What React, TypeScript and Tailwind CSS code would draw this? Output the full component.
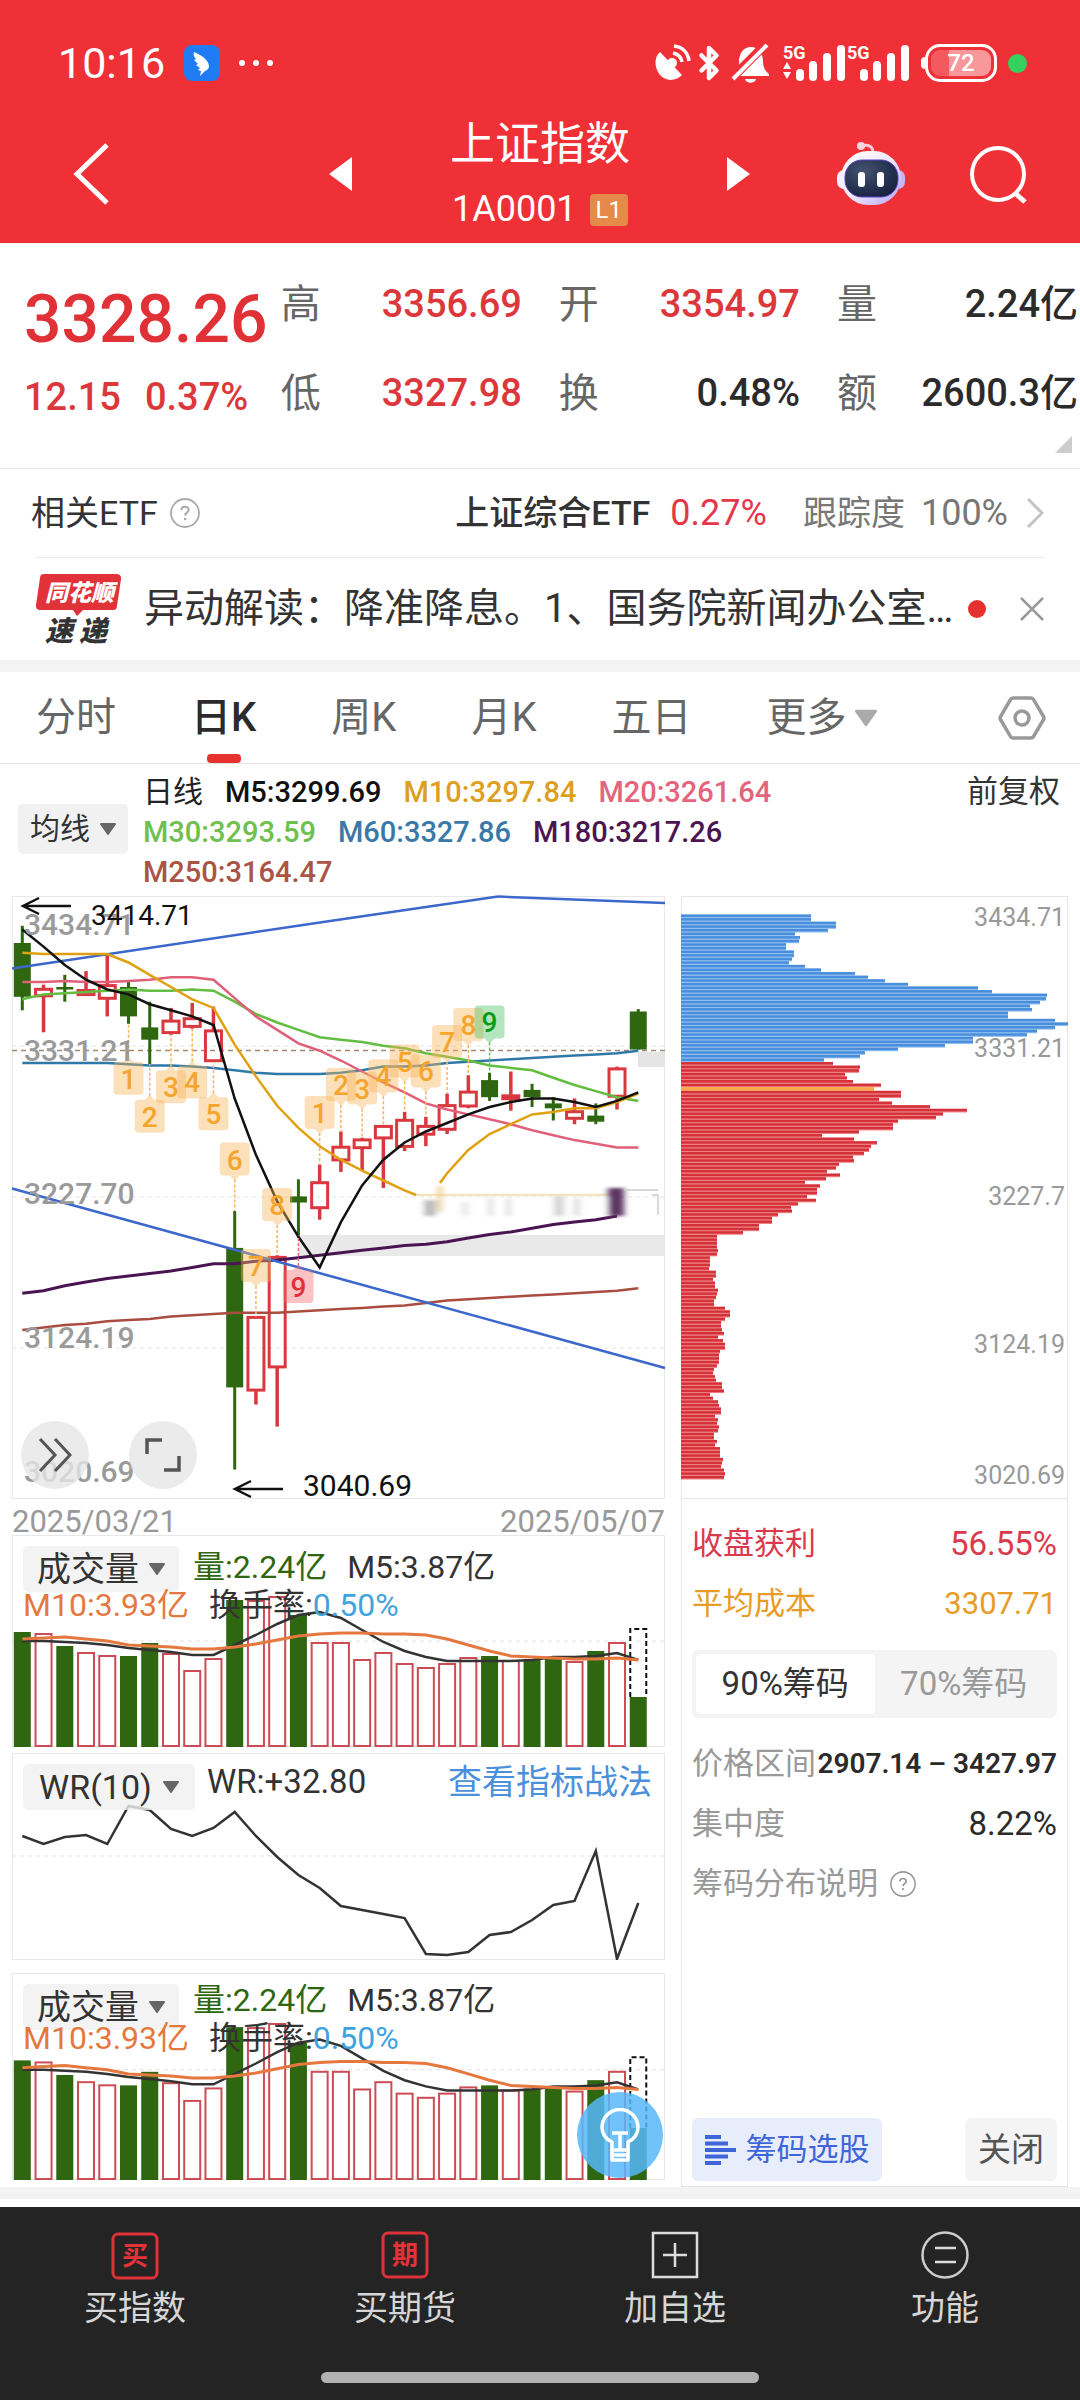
import React, { useState } from "react";
import { LuBluetooth } from "react-icons/lu";

const GREEN = "#2f6711";
const RED = "#d9383f";

// ---- chart data ----

const STEP = 21.24;
const cx = (i: number) => 10.3 + STEP * i;
const py = (v: number) => Math.round(v * 12.245 - 8) / 10;

// [up, wick top, body top, body bottom, wick bottom]
const candles: [number, number, number, number, number][] = [
  [0, 25, 39, 83, 94], [1, 73, 76, 83, 112], [0, 65, 75, 77, 87], [1, 62, 77, 82, 82], [1, 48, 73, 85, 99],
  [0, 71, 75, 99, 105], [0, 87, 108, 118, 138], [1, 92, 102, 113, 114], [1, 88, 100, 108, 109], [1, 91, 110, 136, 136],
  [0, 258, 288, 402, 469], [1, 344, 344, 405, 416], [1, 294, 295, 386, 434], [0, 232, 246, 251, 278], [1, 220, 234, 256, 265],
  [1, 193, 205, 217, 226], [1, 198, 199, 207, 225], [1, 188, 188, 199, 239], [1, 177, 183, 206, 209], [1, 181, 188, 196, 205],
  [1, 162, 171, 192, 195], [1, 147, 160, 173, 174], [0, 145, 151, 165, 168], [1, 144, 163, 167, 176], [0, 154, 159, 165, 173],
  [0, 165, 170, 174, 184], [1, 166, 176, 183, 187], [0, 170, 180, 185, 187], [1, 140, 141, 165, 175], [0, 93, 95, 126, 126],
];

const ma5 = [28, 42, 57, 69, 77, 81, 89, 94, 99, 106, 166, 212, 250, 279, 304, 267, 237, 216, 202, 193, 186, 179, 173, 169, 166, 166, 169, 173, 168, 161];
const ma10a = [47, 48, 48, 48, 48, 55, 65, 75, 85, 92, 122, 148, 172, 190, 205, 216, 225, 233, 241];
const ma10b = [227, 208, 195, 187, 179, 177, 174, 174, 169, 162];
const ma20 = [71, 71, 70, 71, 71, 70, 69, 67, 67, 69, 84, 99, 110, 121, 127, 135, 144, 153, 161, 170, 175, 179, 183, 187, 192, 196, 200, 203, 206, 206];
const ma30 = [85, 81, 80, 79, 78, 77, 78, 78, 77, 78, 87, 97, 104, 110, 116, 118, 120, 123, 125, 129, 132, 135, 139, 141, 143, 149, 155, 160, 165, 168];
const ma60 = [137, 137, 137, 137, 137, 138, 139, 139, 140, 141, 143, 145, 146, 146, 146, 145, 143, 140, 140, 139, 137, 136, 135, 134, 133, 132, 131, 130, 129, 127];
const ma180 = [325, 323, 319, 316, 313, 311, 309, 307, 304, 301, 301, 299, 298, 296, 294, 292, 290, 288, 286, 285, 283, 280, 277, 275, 272, 269, 267, 265, 262];
const ma250 = [355, 353, 351, 350, 348, 347, 346, 344, 343, 342, 341, 341, 341, 340, 339, 338, 337, 336, 335, 333, 331, 330, 329, 328, 327, 326, 325, 324, 323, 321];

// nine-turn markers: [label, candle index, box top, dir, kind]
const turns: [string, number, number, "up" | "down", "o" | "r" | "g"][] = [
  ["1", 5, 136, "up", "o"], ["2", 6, 167, "up", "o"], ["3", 7, 143, "up", "o"], ["4", 8, 139, "up", "o"], ["5", 9, 165, "up", "o"],
  ["6", 10, 202, "down", "o"], ["7", 11, 289, "down", "o"], ["8", 12, 239, "down", "o"], ["9", 13, 306, "up", "r"],
  ["1", 14, 164, "down", "o"], ["2", 15, 141, "down", "o"], ["3", 16, 144, "down", "o"], ["4", 17, 134, "down", "o"],
  ["5", 18, 122, "down", "o"], ["6", 19, 130, "down", "o"], ["7", 20, 106, "down", "o"], ["8", 21, 92, "down", "o"], ["9", 22, 90, "down", "g"],
];
const turnFill = { o: "#f9b45a", r: "#f26d6d", g: "#4fc263" };
const turnText = { o: "#f5a52c", r: "#e0303b", g: "#0b9a16" };

const chips = [
  130, 130, 155, 155, 147, 114, 119, 118, 105, 105, 113, 113, 111, 108, 124, 140, 174, 187, 204, 227, 297, 311, 366, 365, 359, 349, 351, 327, 327,
  374, 387, 374, 356, 346, 292, 292, 264, 217, 184, 179, 143, 152, 179, 178, 164, 166, 172, 200, 193, 220, 220, 198, 211, 249, 286, 262, 255, 217,
  212, 212, 178, 141, 173, 196, 190, 188, 183, 172, 173, 158, 155, 146, 159, 145, 124, 139, 136, 136, 126, 135, 117, 110, 111, 97, 91, 91,
  78, 78, 62, 36, 36, 36, 36, 37, 36, 29, 29, 29, 28, 35, 35, 32, 34, 34, 37, 36, 35, 33, 33, 44, 49, 49, 44, 40, 40, 41, 43, 37, 42, 44, 44,
  39, 38, 38, 38, 36, 33, 32, 34, 35, 41, 41, 43, 29, 32, 37, 38, 40, 40, 34, 37, 36, 38, 37, 33, 33, 36, 34, 39, 39, 39, 42, 41, 40, 43, 44, 43,
];
const CHIP_STEP = 565 / chips.length;
const AVG_ROW = 48;
const LAST_BLUE = 40;

const volumes = [115, 114, 101, 95, 92, 91, 104, 94, 77, 89, 147, 147, 151, 132, 105, 105, 88, 95, 84, 80, 84, 90, 91, 87, 88, 89, 86, 96, 105, 50];
const volUp = [0, 1, 0, 1, 1, 0, 0, 1, 1, 1, 0, 1, 1, 0, 1, 1, 1, 1, 1, 1, 1, 1, 0, 1, 0, 0, 1, 0, 1, 0];
const volM5 = [106, 106, 105, 104, 102, 99, 97, 95, 92, 92, 102, 112, 123, 132, 135, 129, 117, 105, 96, 90, 86, 86, 86, 86, 87, 90, 90, 91, 94, 87];
const volM10 = [108, 109, 110, 108, 106, 102, 101, 100, 98, 98, 100, 103, 107, 111, 113, 114, 114, 113, 113, 112, 108, 102, 96, 91, 90, 89, 88, 88, 89, 87];
const wr = [83, 91, 84, 82, 91, 53, 57, 76, 83, 75, 59, 83, 104, 122, 135, 153, 157, 161, 165, 201, 202, 199, 182, 179, 167, 152, 148, 98, 206, 150];

const line = (ys: number[], map: (v: number) => number, from = 0) =>
  ys.map((v, i) => `${cx(i + from).toFixed(1)},${map(v).toFixed(1)}`).join(" ");

// ---- small pieces ----

const Caret: React.FC<{ className?: string }> = ({ className }) => (
  <svg viewBox="0 0 16 12" className={className}>
    <path d="M1 0h14a1 1 0 0 1 .8 1.6L8.8 11.4a1 1 0 0 1-1.6 0L.2 1.6A1 1 0 0 1 1 0z" fill="currentColor" />
  </svg>
);

const Signal: React.FC<{ arrows?: boolean }> = ({ arrows }) => (
  <svg viewBox="0 0 64 40" className="h-10 w-16" fill="#fff">
    <text x="0" y="16" fontSize="18" fontWeight="700" fill="#fff">5G</text>
    {arrows && <path d="M4 19l4 7H0zM4 36l4-7H0z" />}
    <rect x="13" y="26" width="8" height="12" rx="4" />
    <rect x="26" y="18" width="8" height="20" rx="4" />
    <rect x="40" y="10" width="8" height="28" rx="4" />
    <rect x="54" y="2" width="8" height="36" rx="4" />
  </svg>
);

const Robot = () => (
  <svg viewBox="0 0 70 66" className="h-[66px] w-[70px]">
    <defs>
      <linearGradient id="head" x1="0" y1="0" x2="1" y2="1">
        <stop offset="0" stopColor="#fff" />
        <stop offset="0.5" stopColor="#f1e9fb" />
        <stop offset="1" stopColor="#b3a4f5" />
      </linearGradient>
      <radialGradient id="face" cx="0.35" cy="0.3" r="0.8">
        <stop offset="0" stopColor="#43536f" />
        <stop offset="1" stopColor="#141f3d" />
      </radialGradient>
    </defs>
    <path d="M26 5c6-2 11 0 11 7" fill="none" stroke="#fbc9d6" strokeWidth="3" />
    <circle cx="25" cy="5" r="4" fill="#fbd5dd" />
    <rect x="1" y="29" width="14" height="19" rx="7" fill="#f6eefb" />
    <rect x="55" y="29" width="14" height="19" rx="7" fill="#c4b6f6" />
    <rect x="5" y="10" width="60" height="54" rx="27" fill="url(#head)" />
    <rect x="9" y="19" width="53" height="37" rx="17" fill="url(#face)" stroke="#5a41c8" strokeWidth="1" />
    <rect x="22" y="31" width="7" height="15" rx="3" fill="#fff" />
    <rect x="41" y="31" width="7" height="15" rx="3" fill="#fff" />
  </svg>
);

const HelpIcon: React.FC<{ className?: string }> = ({ className }) => (
  <svg viewBox="0 0 30 30" className={className} fill="none" stroke="currentColor">
    <circle cx="15" cy="15" r="14" strokeWidth="1.8" />
    <path d="M11.4 12.2c0-4.8 7.4-4.6 7.2-.2-.1 2.6-3.5 2.7-3.5 5.6" strokeWidth="2" />
    <circle cx="15.1" cy="21" r="0.7" strokeWidth="1.2" />
  </svg>
);

// ---- header ----

const StatusBar = () => (
  <div className="flex h-[106px] items-center pl-[58px] pr-[53px] pt-5 text-white">
    <span className="text-[43px] leading-none">10:16</span>
    <svg viewBox="0 0 36 36" className="ml-[19px] h-9 w-9">
      <rect width="36" height="36" rx="8" fill="#1f7cf5" />
      <path d="M10 7c9 4 14 8 15 14 0 3-2 4-4 5l-5 5 1-5-3-1 2-2-4-3 2-1-4-4 2-1c-2-2-3-4-2-7z" fill="#fff" />
    </svg>
    <span className="ml-[19px] flex gap-2">
      <i className="h-[6px] w-[6px] rounded-full bg-white" />
      <i className="h-[6px] w-[6px] rounded-full bg-white" />
      <i className="h-[6px] w-[6px] rounded-full bg-white" />
    </span>
    <div className="ml-auto flex items-center">
      <svg viewBox="0 0 38 38" className="h-[38px] w-[38px]" fill="none">
        <path d="M7 8L29 31c-7 7-17 6-22 0S0 14 7 8z" fill="#fff" />
        <circle cx="19" cy="19" r="5" fill="#fff" />
        <path d="M20 9c5 1 8 4 9 9M21 2c9 1 14 7 15 15" stroke="#fff" strokeWidth="3.500" />
      </svg>
      <LuBluetooth className="h-[44px] w-9 text-white" strokeWidth={3} />
      <svg viewBox="0 0 40 40" className="ml-1 mr-3 h-10 w-10">
        <path d="M7 27c1-3 1-6 1-10C9 9 13 4 20 4s11 5 12 13c0 6 1 10 6 14v2H5z" fill="#fff" />
        <path d="M14 36h11c-1 5-10 5-11 0z" fill="#fff" />
        <path d="M0 36L35 1" stroke="#f03037" strokeWidth="9" />
        <path d="M2 36L36 2" stroke="#fff" strokeWidth="4" />
      </svg>
      <Signal arrows />
      <Signal />
      <div className="ml-[10px] h-3 w-1 rounded-l bg-white" />
      <div className="h-[38px] w-[72px] rounded-[15px] border-[3px] border-white p-[3px]">
        <div className="flex h-full items-center justify-center rounded-[9px] bg-linear-to-r from-white/20 from-30% to-white/50 to-30% text-[24px] font-medium leading-none">
          72
        </div>
      </div>
      <i className="ml-[11px] h-[19px] w-[19px] rounded-full bg-[#36d15c]" />
    </div>
  </div>
);

const TitleBar = () => (
  <div className="grid h-[137px] grid-cols-[1fr_auto_1fr] items-center pb-[7px] text-white">
    <div className="flex items-center justify-between pl-[72px] pr-[98px]">
      <button aria-label="返回">
        <svg viewBox="0 0 38 62" className="h-[62px] w-[38px]" fill="none" stroke="#fff" strokeWidth="5">
          <path d="M35 2L5 31l30 29" />
        </svg>
      </button>
      <button aria-label="上一个">
        <svg viewBox="0 0 23 34" className="h-[34px] w-[23px]"><path d="M23 0v34L0 17z" fill="#fff" /></svg>
      </button>
    </div>
    <div className="pt-[6px] text-center">
      <h1 className="text-[45px] leading-[65px]">上证指数</h1>
      <p className="flex items-center justify-center gap-[13px] text-[36px] leading-[65px]">
        1A0001
        <span className="h-8 rounded-[4px] bg-[#e58a48] px-[6px] text-[24px] leading-8">L1</span>
      </p>
    </div>
    <div className="flex items-center pl-[97px]">
      <button aria-label="下一个">
        <svg viewBox="0 0 23 34" className="h-[34px] w-[23px]"><path d="M0 0v34l23-17z" fill="#fff" /></svg>
      </button>
      <button className="ml-[86px]" aria-label="智能助手"><Robot /></button>
      <button className="ml-auto mr-[51px]" aria-label="搜索">
        <svg viewBox="0 0 60 60" className="h-[60px] w-[60px]" fill="none" stroke="#fff" strokeWidth="4">
          <circle cx="29" cy="30" r="26" />
          <path d="M46 49l10 9" strokeWidth="5" />
        </svg>
      </button>
    </div>
  </div>
);

const quotes = [
  [["高", "3356.69", true], ["低", "3327.98", true]],
  [["开", "3354.97", true], ["换", "0.48%", false]],
  [["量", "2.24亿", false], ["额", "2600.3亿", false]],
] as [string, string, boolean][][];

const Quote = () => (
  <section className="relative flex h-[226px] border-b border-[#e8e8e8] pt-[17px]">
    <div className="w-[26%] pl-6 font-medium text-[#e03136]">
      <div className="pt-4 text-[66px] leading-[88px]">3328.26</div>
      <div className="flex gap-6 text-[38px] leading-[66px] text-[#dc383c]">
        <span>12.15</span>
        <span>0.37%</span>
      </div>
    </div>
    <div className="flex flex-1 gap-[37px] pr-[2px]">
      {quotes.map((col) => (
        <dl key={col[0][0]} className="flex-1">
          {col.map(([label, value, red]) => (
            <div key={label} className="flex h-[89px] items-center justify-between whitespace-nowrap">
              <dt className="text-[40px] text-[#666]">{label}</dt>
              <dd className={red ? "text-[38px] font-medium text-[#dc383c]" : "text-[38px] font-medium text-[#2b2b2b]"}>{value}</dd>
            </div>
          ))}
        </dl>
      ))}
    </div>
    <svg viewBox="0 0 17 17" className="absolute bottom-[15px] right-2 h-[17px] w-[17px]"><path d="M17 0v17H0z" fill="#ccc" /></svg>
  </section>
);

const EtfRow = () => (
  <div className="flex h-[88px] items-center pl-[31px] pr-9 text-[34px] text-[#333]">
    <span>相关ETF</span>
    <HelpIcon className="ml-[12px] h-[30px] w-[30px] text-[#aaa]" />
    <a href="#etf" className="ml-auto flex items-center whitespace-nowrap">
      <span className="font-medium">上证综合ETF</span>
      <span className="ml-5 text-[36px] text-[#e5364a]">0.27%</span>
      <span className="ml-9 text-[#777]">跟踪度</span>
      <span className="ml-4 text-[36px] text-[#777]">100%</span>
      <svg viewBox="0 0 18 30" className="ml-[18px] h-[30px] w-[18px]" fill="none" stroke="#c4c4c4" strokeWidth="3">
        <path d="M2 1l14 14L2 29" />
      </svg>
    </a>
  </div>
);

const NewsRow = () => (
  <div className="mx-9 flex h-[103px] items-center border-t border-[#ececec]">
    <svg viewBox="0 0 86 70" className="h-[70px] w-[86px] shrink-0 overflow-visible">
      <path d="M8 0h73a4 4 0 0 1 4 5l-4 27a4 4 0 0 1-4 4H47l-6 6-4-6H4a4 4 0 0 1-4-5L4 4a4 4 0 0 1 4-4z" fill="#e03238" />
      <text x="9" y="27" fontSize="23" fontWeight="900" fontStyle="italic" fill="#fff">同花顺</text>
      <text x="9" y="67" fontSize="28" fontWeight="900" fontStyle="italic" fill="#333">速</text>
      <text x="43" y="67" fontSize="28" fontWeight="900" fontStyle="italic" fill="#333">递</text>
    </svg>
    <a href="#news" className="ml-[22px] min-w-0 flex-1 whitespace-nowrap text-[40px] text-[#333]">
      异动解读：降准降息。1、国务院新闻办公室…
    </a>
    <i className="ml-3 h-[18px] w-[18px] rounded-full bg-[#e5322f]" />
    <button className="ml-[34px]" aria-label="关闭">
      <svg viewBox="0 0 24 24" className="h-6 w-6" stroke="#999" strokeWidth="2.500"><path d="M1 1l22 22M23 1L1 23" /></svg>
    </button>
  </div>
);

const tabs = ["分时", "日K", "周K", "月K", "五日"];

const Tabs = () => {
  const [active, setActive] = useState<string>("日K");

  return (
    <nav className="flex h-[92px] items-center gap-[75px] border-b border-[#e6e6e6] pl-9 pr-[34px] text-[40px] text-[#666]">
      {tabs.map((t) => (
        <button
          key={t}
          onClick={() => setActive(t)}
          className={t === active ? "relative h-full font-medium text-[#2b2b2b]" : "relative h-full"}
        >
          {t}
          {t === active && <i className="absolute bottom-0 left-1/2 h-[9px] w-[34px] -translate-x-1/2 rounded-[4px] bg-[#e5322f]" />}
        </button>
      ))}
      <button className="flex items-center gap-2">
        更多
        <Caret className="h-[18px] w-[22px] text-[#aaa]" />
      </button>
      <button className="ml-auto" aria-label="设置">
        <svg viewBox="0 0 48 44" className="h-11 w-12" fill="none" stroke="#999" strokeWidth="3.500">
          <path d="M15 2h18a3 3 0 0 1 2.500 1.500l10 17a3 3 0 0 1 0 3l-10 17A3 3 0 0 1 33 42H15a3 3 0 0 1-2.500-1.500l-10-17a3 3 0 0 1 0-3l10-17A3 3 0 0 1 15 2z" />
          <circle cx="24" cy="22" r="7" />
        </svg>
      </button>
    </nav>
  );
};

const Averages = () => (
  <div className="flex items-start pb-1 pl-[18px] pr-5 pt-2 text-[30px] leading-10">
    <button className="mt-8 flex h-[50px] w-[110px] shrink-0 items-center justify-center gap-[10px] rounded-[5px] bg-[#f1f1f1] text-[#333]">
      均线
      <Caret className="h-3 w-4 text-[#666]" />
    </button>
    <div className="ml-[15px] flex-1 font-medium">
      <div className="flex gap-[22px]">
        <span className="font-normal text-[#222]">日线</span>
        <span className="text-[29px] text-[#111]">M5:3299.69</span>
        <span className="text-[29px] text-[#dda01e]">M10:3297.84</span>
        <span className="text-[29px] text-[#e3647c]">M20:3261.64</span>
      </div>
      <div className="flex gap-[22px] text-[29px]">
        <span className="text-[#6fc04e]">M30:3293.59</span>
        <span className="text-[#3a78a8]">M60:3327.86</span>
        <span className="text-[#4b1550]">M180:3217.26</span>
      </div>
      <div className="text-[29px] leading-10 text-[#ab5345]">M250:3164.47</div>
    </div>
    <span className="text-[31px] text-[#333]">前复权</span>
  </div>
);

// ---- charts ----

const Turn: React.FC<{ t: (typeof turns)[number] }> = ({ t: [label, i, top, dir, kind] }) => {
  const x = cx(i);
  const y = py(top);
  const [, wickTop, , , wickBottom] = candles[i];
  const tip = dir === "down" ? y + 37 : y - 4;
  return (
    <g>
      <line
        x1={x} x2={x} y1={tip} y2={dir === "down" ? py(wickTop) : py(wickBottom)}
        stroke={turnFill[kind]} strokeWidth="1.500" strokeDasharray="3 2"
      />
      <rect x={x - 15} y={y} width="30" height="33" rx="4" fill={turnFill[kind]} opacity="0.42" />
      <path
        d={dir === "down" ? `M${x - 5} ${y + 33}h10l-5 5z` : `M${x - 5} ${y}h10l-5 -5z`}
        fill={turnFill[kind]} opacity="0.42"
      />
      <text x={x} y={y + 27} textAnchor="middle" fontSize="28" fontWeight="500" fill={turnText[kind]}>{label}</text>
    </g>
  );
};

const MainChart = () => (
  <div className="relative ring-1 ring-inset ring-[#e8e8e8]">
    <svg viewBox="0 0 653 603" className="block w-full overflow-visible" fill="none">
      <defs>
        <filter id="smear" x="-20%" y="-20%" width="140%" height="140%"><feGaussianBlur stdDeviation="3 1.500" /></filter>
      </defs>
      <rect x="286" y="339" width="367" height="21" fill="#e9e9e9" />
      <rect x="626" y="156" width="27" height="15" fill="#e4e4e4" />
      {[150, 301, 452].map((y) => (
        <line key={y} x1="0" x2="653" y1={y} y2={y} stroke="#e4e4e4" strokeDasharray="4 4" />
      ))}
      <line x1="0" x2="653" y1="154.500" y2="154.500" stroke="#a08a74" strokeWidth="1.500" strokeDasharray="5 4" />

      {candles.map(([up, wt, bt, bb, wb], i) => {
        const x = cx(i);
        const h = py(bb) - py(bt);
        return up ? (
          <g key={i} stroke={RED} strokeWidth="3.500">
            {wt < bt && <line x1={x} x2={x} y1={py(wt)} y2={py(bt)} />}
            {wb > bb && <line x1={x} x2={x} y1={py(bb)} y2={py(wb)} />}
            <rect x={x - 8} y={py(bt) + 1} width="16" height={Math.max(h - 2, 2)} strokeWidth="3" />
          </g>
        ) : (
          <g key={i} fill={GREEN}>
            <rect x={x - 1.5} y={py(wt)} width="3" height={py(wb) - py(wt)} />
            <rect x={x - 8.5} y={py(bt)} width="17" height={h} />
          </g>
        );
      })}

      <g strokeWidth="2.500">
        <path d="M0 72.500L318 25 486 .5" stroke="#3c68cc" />
        <path d="M486 .5L653 7" stroke="#3c68cc" />
        <polyline points={line(ma250, py)} stroke="#a94d40" />
        <polyline points={line(ma180, py)} stroke="#4a1452" strokeWidth="3" />
        <polyline points={line(ma60, py)} stroke="#2f79a8" />
        <polyline points={line(ma30, py)} stroke="#62bd40" />
        <polyline points={line(ma20, py)} stroke="#e0607a" />
        <polyline points={`${line(ma10a, py)} 404,299`} stroke="#e0a010" />
        <polyline points={`428,287 ${line(ma10b, py, 20)}`} stroke="#e0a010" />
        <path d="M404 299h200" stroke="#e0a010" opacity="0.3" />
        <polyline points={line(ma5, py)} stroke="#111" />
        <path d="M0 292.500L318 380 653 472" stroke="#3c68cc" />
      </g>

      {turns.map((t, i) => <Turn key={i} t={t} />)}

      {/* mosaic strip over the lower right of the plot */}
      <g filter="url(#smear)">
        <rect x="408" y="301" width="200" height="18" fill="#fff" opacity="0.7" />
        <rect x="412" y="304" width="12" height="16" fill="#bbb" />
        <rect x="426" y="290" width="4" height="26" fill="#e6c877" />
        <rect x="450" y="306" width="6" height="14" fill="#e6e6e6" />
        <rect x="476" y="302" width="5" height="18" fill="#ddd" />
        <rect x="494" y="302" width="5" height="18" fill="#ddd" />
        <rect x="542" y="300" width="10" height="20" fill="#d4d4d4" />
        <rect x="562" y="302" width="6" height="18" fill="#ddd" />
        <rect x="596" y="292" width="16" height="28" fill="#5b3563" />
      </g>
      <path d="M612 294h34M640 299h6v20" stroke="#ccc" strokeWidth="1.500" />

      <g fontSize="30" fontWeight="500" fill="#9a9a9a">
        <text x="12" y="39">3434.71</text>
        <text x="12" y="165">3331.21</text>
        <text x="12" y="308">3227.70</text>
        <text x="12" y="452">3124.19</text>
        <text x="12" y="586">3020.69</text>
      </g>
      <g fontSize="28" fill="#111">
        <text x="79" y="29">3414.71</text>
        <text x="291" y="600" fontSize="30">3040.69</text>
      </g>
      <g stroke="#111" strokeWidth="2.500">
        <path d="M59 10H11M27 2L11 10l16 8" />
        <path d="M271 593h-48M239 585l-16 8 16 8" />
      </g>
    </svg>
    <div className="absolute bottom-[10px] left-[9px] flex gap-10">
      <button aria-label="展开" className="flex h-[68px] w-[68px] items-center justify-center rounded-full bg-[#e6e6e6]/80">
        <svg viewBox="0 0 34 34" className="h-[34px] w-[34px]" fill="none" stroke="#555" strokeWidth="3">
          <path d="M2 1l15 16L2 33M17 1l15 16-15 16" />
        </svg>
      </button>
      <button aria-label="全屏" className="flex h-[68px] w-[68px] items-center justify-center rounded-full bg-[#e6e6e6]/80">
        <svg viewBox="0 0 36 34" className="h-[34px] w-9" fill="none" stroke="#555" strokeWidth="3.500">
          <path d="M2 16V2h15M34 18v14H19" />
        </svg>
      </button>
    </div>
  </div>
);

const VolumePanel: React.FC<{ height: number; scale: number; tight?: boolean }> = ({ height, scale, tight }) => {
  const vy = (v: number) => height - v * scale;
  return (
    <div className="relative ring-1 ring-inset ring-[#e8e8e8]">
      <svg viewBox={`0 0 653 ${height}`} className="block w-full" fill="none">
        <line x1="0" x2="653" y1={vy(106)} y2={vy(106)} stroke="#e0e0e0" strokeDasharray="4 4" />
        {volumes.map((v, i) =>
          volUp[i] ? (
            <rect key={i} x={cx(i) - 8} y={vy(v) + 1} width="16" height={v * scale - 2} stroke="#cb4c55" strokeWidth="2" />
          ) : (
            <rect key={i} x={cx(i) - 8.5} y={vy(v)} width="17" height={v * scale} fill={GREEN} />
          )
        )}
        <path d={`M${cx(29) - 8} ${vy(50)}V${vy(118)}h16V${vy(50)}`} stroke="#111" strokeWidth="2" strokeDasharray="5 3" />
        <polyline points={line(volM5, vy)} stroke="#333" strokeWidth="2.500" />
        <polyline points={line(volM10, vy)} stroke="#e5783f" strokeWidth="3" />
      </svg>
      <div
        className={
          tight
            ? "absolute inset-x-0 top-0 flex flex-wrap pl-[11px] pt-[11px] text-[32px] leading-[32px] text-[#333]"
            : "absolute inset-x-0 top-0 flex flex-wrap pl-[11px] pt-[11px] text-[32px] leading-[42px] text-[#333]"
        }
      >
        <button className="flex h-[46px] w-[156px] items-center justify-center gap-[10px] rounded-[5px] bg-[#f0f0f0]/80 text-[34px]">
          成交量
          <Caret className="h-3 w-4 text-[#666]" />
        </button>
        <span className="ml-[14px] text-[#2f6711]">量:2.24亿</span>
        <span className="ml-5">M5:3.87亿</span>
        <div className="-mt-2 flex w-full gap-5">
          <span className="text-[#e5783f]">M10:3.93亿</span>
          <span>换手率:<span className="text-[#41a3dd]">0.50%</span></span>
        </div>
      </div>
    </div>
  );
};

const WrPanel = () => (
  <div className="relative ring-1 ring-inset ring-[#e8e8e8]">
    <svg viewBox="0 0 653 207" className="block w-full" fill="none">
      <line x1="0" x2="653" y1="103" y2="103" stroke="#e0e0e0" strokeDasharray="4 4" />
      <polyline points={line(wr, (v) => v)} stroke="#333" strokeWidth="2.500" />
    </svg>
    <div className="absolute inset-x-0 top-0 flex pl-[11px] pr-[13px] pt-[11px] text-[33px] leading-[36px] text-[#333]">
      <button className="flex h-[46px] w-[172px] items-center justify-center gap-[11px] rounded-[5px] bg-[#f0f0f0]/80 text-[34px]">
        WR(10)
        <Caret className="h-3 w-4 text-[#666]" />
      </button>
      <span className="ml-3">WR:+32.80</span>
      <a href="#wr" className="ml-auto text-[34px] text-[#4a90dc]">查看指标战法</a>
    </div>
  </div>
);

const ChipChart = () => (
  <svg viewBox="0 0 387 602" className="block w-full border-b border-[#e6e6e6]">
    {chips.map((w, i) => {
      const y = 18.5 + i * CHIP_STEP;
      const blue = i <= LAST_BLUE;
      const avg = i === AVG_ROW;
      return (
        <g key={i}>
          <rect x="0" y={y} width={w} height={CHIP_STEP} fill={avg ? "#fdb352" : blue ? "#8fbff2" : "#f08080"} />
          <rect x="0" y={y} width={w} height="2.500" fill={avg ? "#f9a64a" : blue ? "#4a8edb" : "#d4323a"} />
        </g>
      );
    })}
    <g fontSize="25" fill="#999" textAnchor="end">
      <text x="384" y="30">3434.71</text>
      <text x="384" y="161">3331.21</text>
      <text x="384" y="309">3227.7</text>
      <text x="384" y="457">3124.19</text>
      <text x="384" y="588">3020.69</text>
    </g>
  </svg>
);

const ChipPanel = () => {
  const [range, setRange] = useState<90 | 70>(90);

  return (
    <aside className="flex flex-col ring-1 ring-inset ring-[#e6e6e6]">
      <ChipChart />
      <div className="flex flex-1 flex-col pb-[6px] pl-[11px] pr-[11px] pt-[15px] text-[31px] leading-[60px] text-[#999]">
        <div className="flex justify-between text-[#d93a4c]"><span>收盘获利</span><span className="text-[33px]">56.55%</span></div>
        <div className="flex justify-between text-[#e89c24]"><span>平均成本</span><span>3307.71</span></div>
        <div className="mt-4 flex h-[68px] rounded-[6px] bg-[#f4f4f4] p-1">
          <button
            onClick={() => setRange(90)}
            className={range === 90 ? "flex-1 rounded-[4px] bg-white text-[33px] text-[#333]" : "flex-1 rounded-[4px] text-[33px]"}
          >
            90%筹码
          </button>
          <button
            onClick={() => setRange(70)}
            className={range === 70 ? "flex-1 rounded-[4px] bg-white text-[33px] text-[#333]" : "flex-1 rounded-[4px] text-[33px]"}
          >
            70%筹码
          </button>
        </div>
        <div className="mt-4 flex justify-between whitespace-nowrap">
          <span>价格区间</span>
          <span className="text-[28px] font-semibold text-[#2b2b2b]">2907.14 – 3427.97</span>
        </div>
        <div className="flex justify-between"><span>集中度</span><span className="text-[33px] text-[#2b2b2b]">8.22%</span></div>
        <div className="flex items-center gap-3">筹码分布说明<HelpIcon className="h-[26px] w-[26px]" /></div>
        <div className="mt-auto flex justify-between">
          <button className="flex h-[63px] w-[190px] items-center justify-center gap-[10px] rounded-[6px] bg-[#e8edfc] text-[#3f66d8]">
            <svg viewBox="0 0 31 30" className="h-[30px] w-[31px]" fill="#3f66d8">
              <rect y="0" width="16" height="4" />
              <rect y="6.500" width="23" height="4" />
              <rect y="13" width="31" height="4" />
              <rect y="19.500" width="23" height="4" />
              <rect y="26" width="16" height="4" />
            </svg>
            筹码选股
          </button>
          <button className="h-[63px] w-[92px] rounded-[6px] bg-[#f4f4f4] text-[33px] text-[#555]">关闭</button>
        </div>
      </div>
    </aside>
  );
};

// ---- bottom nav ----

const navItems = [
  {
    label: "买指数",
    icon: (
      <>
        <rect x="2" y="3" width="44" height="44" rx="5" stroke="#dd3338" strokeWidth="3" />
        <text x="24" y="34" textAnchor="middle" fontSize="26" fontWeight="700" fill="#e53238">买</text>
      </>
    ),
  },
  {
    label: "买期货",
    icon: (
      <>
        <rect x="2" y="2" width="44" height="44" rx="5" stroke="#dd3338" strokeWidth="3" />
        <text x="24" y="33" textAnchor="middle" fontSize="26" fontWeight="700" fill="#e53238">期</text>
      </>
    ),
  },
  {
    label: "加自选",
    icon: <path d="M2 2h44v44H2zM24 12v24M12 24h24" stroke="#ddd" strokeWidth="2.500" />,
  },
  {
    label: "功能",
    icon: (
      <>
        <circle cx="24" cy="24" r="22.500" stroke="#ccc" strokeWidth="2.500" />
        <path d="M14 17h21M14 31h21" stroke="#ddd" strokeWidth="2.500" />
      </>
    ),
  },
];

const BottomNav = () => (
  <footer className="h-[193px] bg-[#242424] pt-6">
    <div className="grid grid-cols-4">
      {navItems.map((n) => (
        <button key={n.label} className="flex flex-col items-center text-[34px] leading-[58px] text-[#d6d6d6]">
          <svg viewBox="0 0 48 48" className="h-12 w-12 overflow-visible" fill="none">{n.icon}</svg>
          {n.label}
        </button>
      ))}
    </div>
    <div className="mx-auto mt-[35px] h-[11px] w-[438px] rounded-full bg-[#b2b2b2]" />
  </footer>
);

const App: React.FC = () => {
  return (
    <div className="w-full bg-white font-['Roboto','Noto_Sans_CJK_SC',sans-serif]">
      <header className="bg-[#f03037]">
        <StatusBar />
        <TitleBar />
      </header>
      <Quote />
      <EtfRow />
      <NewsRow />
      <div className="h-3 bg-[#f3f3f3]" />
      <Tabs />
      <Averages />
      <main className="grid grid-cols-[653fr_387fr] gap-4 px-3">
        <div className="flex flex-col pb-[7px]">
          <MainChart />
          <div className="flex h-9 items-end justify-between text-[31px] leading-[26px] text-[#999]">
            <span>2025/03/21</span>
            <span>2025/05/07</span>
          </div>
          <VolumePanel height={212} scale={1} />
          <div className="mt-[6px]"><WrPanel /></div>
          <div className="relative mt-[13px]">
            <VolumePanel height={207} scale={1.04} tight />
            <button
              aria-label="提示"
              className="absolute bottom-[2px] right-[2px] flex h-[86px] w-[86px] items-center justify-center rounded-full bg-[#56b8f9]/85"
            >
              <svg viewBox="0 0 40 54" className="h-[54px] w-10" fill="none" stroke="#fff" strokeWidth="3.500" strokeLinejoin="round">
                <path d="M12 42v-8C6 31 2 26 2 19.500a18 18 0 0 1 36 0C38 26 34 31 28 34v8" />
                <path d="M12 42h16v10H12zM12 47h16M12 25h16M20 25v17" />
              </svg>
            </button>
          </div>
        </div>
        <ChipPanel />
      </main>
      <div className="mb-2 h-3 bg-[#f3f3f3]" />
      <BottomNav />
    </div>
  );
};

export default App;
